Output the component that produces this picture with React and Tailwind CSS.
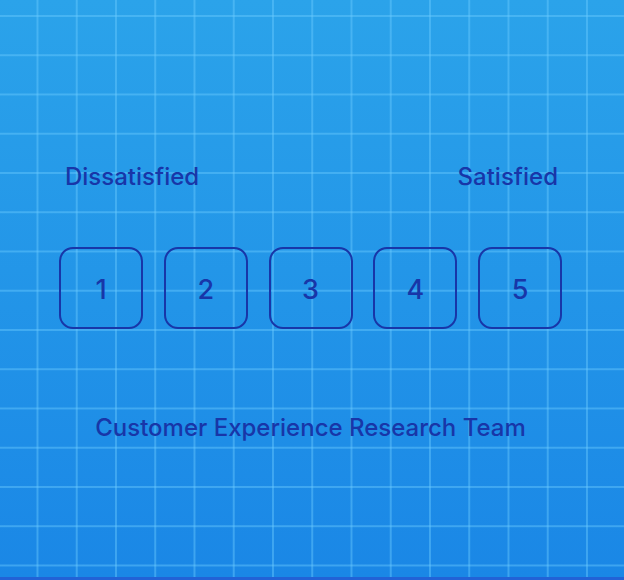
export default function App() {
  const nums = [1, 2, 3, 4, 5];
  return (
    <div className="relative h-[580px] w-[624px] overflow-hidden font-['Inter','Liberation_Sans',sans-serif] text-[#1836a8] bg-[linear-gradient(to_right,rgba(110,205,255,0.42)_2px,transparent_2px),linear-gradient(to_bottom,rgba(110,205,255,0.42)_2px,transparent_2px),linear-gradient(to_bottom,#2ba3ea,#1a87e6)] [background-size:39.25px_39.25px,39.25px_39.25px,100%_100%] [background-position:36.5px_15px,36.5px_15px,0_0] border-b-[3px] border-[#2262d6]">
      <div className="ml-[59px] w-[503px] pt-[162px] flex flex-col">
        <div className="flex justify-between h-[30px] text-[24px] leading-[30px] font-medium pl-[6px] pr-[4px]">
          <span>Dissatisfied</span>
          <span>Satisfied</span>
        </div>
        <div className="mt-[55px] flex justify-between">
          {nums.map((n) => (
            <div
              key={n}
              className="w-[84px] h-[82px] rounded-[14px] border-2 border-[#1836a8] flex items-center justify-center text-[27px] font-medium pt-[5px]"
            >
              {n}
            </div>
          ))}
        </div>
        <div className="mt-[84px] text-center text-[24px] leading-[30px] font-medium">
          Customer Experience Research Team
        </div>
      </div>
    </div>
  );
}
